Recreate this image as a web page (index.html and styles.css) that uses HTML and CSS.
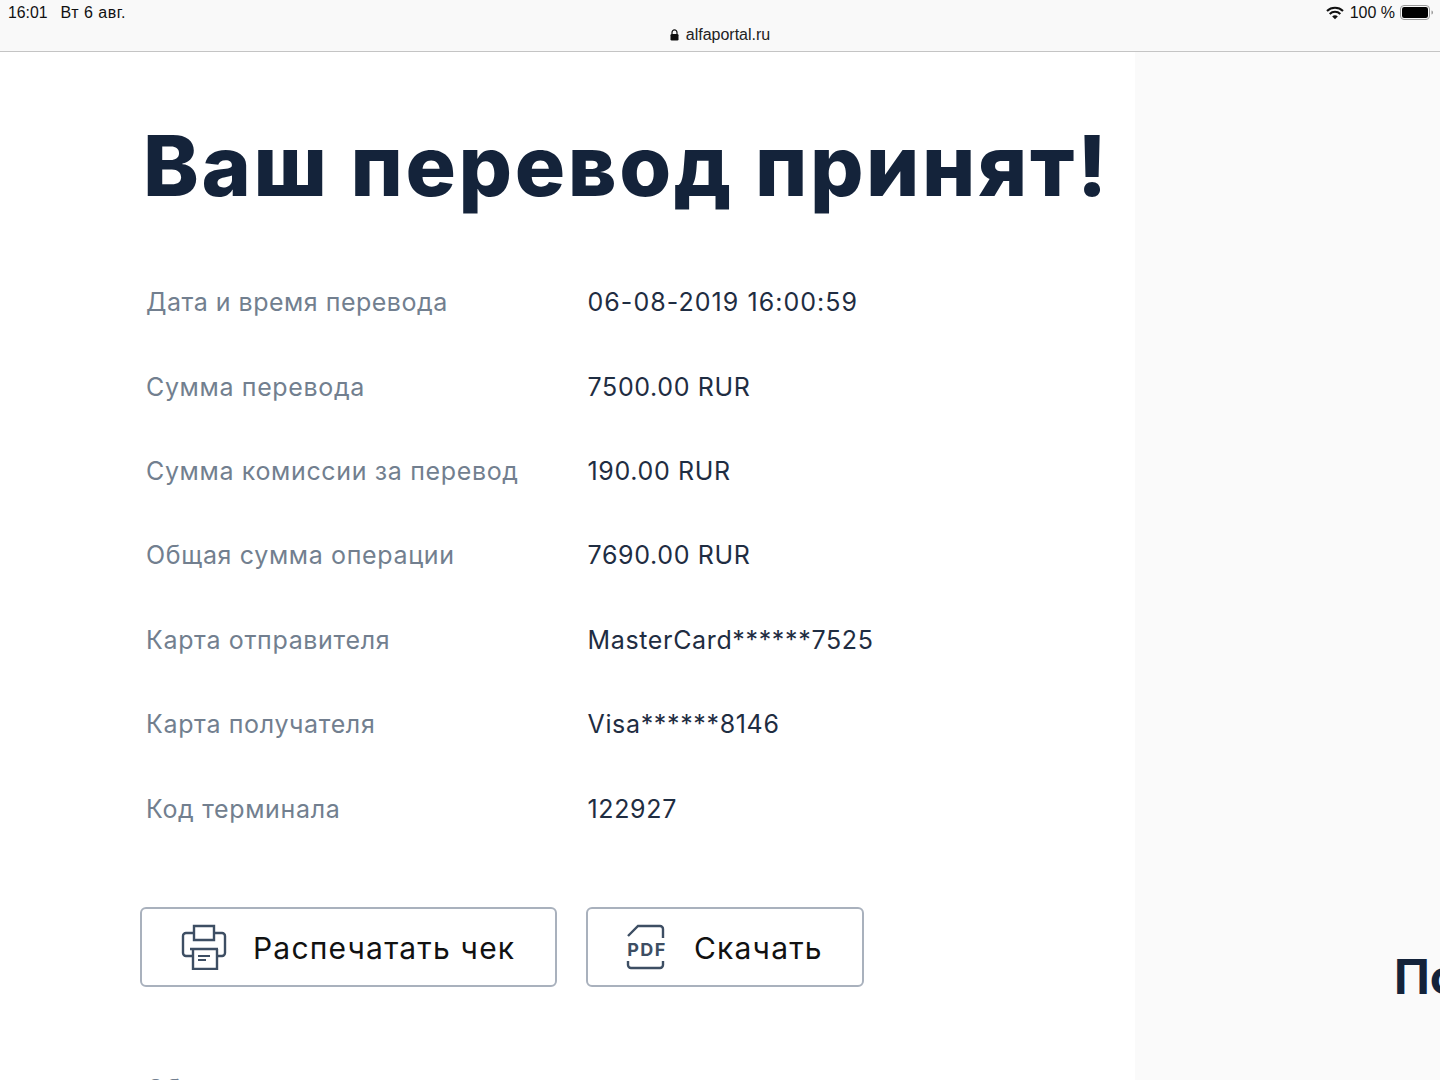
FILE: index.html
```html
<!DOCTYPE html>
<html lang="ru">
<head>
<meta charset="utf-8">
<title>Ваш перевод принят!</title>
<link rel="stylesheet" href="styles.css">
</head>
<body>
<header class="chrome">
  <div class="status">
    <div class="status-left"><span class="time">16:01</span><span class="date">Вт 6 авг.</span></div>
    <div class="status-right">
      <svg class="wifi" width="18" height="14" viewBox="0 0 18 14"><path d="M1 5a11.600 11.600 0 0 1 16 0M3.700 7.900a7.700 7.700 0 0 1 10.600 0" fill="none" stroke="#111" stroke-width="2.100"/><path d="M6.200 10.400a3.900 3.900 0 0 1 5.600 0L9 13.200z" fill="#111"/></svg>
      <span class="pct">100 %</span>
      <svg class="battery" width="34" height="15" viewBox="0 0 34 15"><rect x=".5" y=".5" width="29" height="14" rx="3.500" fill="none" stroke="#999"/><rect x="2" y="2" width="26" height="11" rx="2.200" fill="#000"/><path d="M31.500 5.500c1 .3 1.500 1 1.500 2s-.5 1.700-1.500 2z" fill="#999"/></svg>
    </div>
  </div>
  <div class="address">
    <svg class="lock" width="9" height="12" viewBox="0 0 9 12"><path d="M2 5V3.400a2.500 2.500 0 0 1 5 0V5" fill="none" stroke="#111" stroke-width="1.200"/><rect x=".5" y="5" width="8" height="6.500" rx="1.200" fill="#111"/></svg>
    <span>alfaportal.ru</span>
  </div>
</header>
<div class="layout">
  <main class="content">
    <h1 class="title">Ваш перевод принят!</h1>
    <dl class="details">
      <div class="row row-date"><dt>Дата и время перевода</dt><dd>06-08-2019 16:00:59</dd></div>
      <div class="row"><dt>Сумма перевода</dt><dd>7500.00 RUR</dd></div>
      <div class="row"><dt>Сумма комиссии за перевод</dt><dd>190.00 RUR</dd></div>
      <div class="row"><dt>Общая сумма операции</dt><dd>7690.00 RUR</dd></div>
      <div class="row"><dt>Карта отправителя</dt><dd>MasterCard******7525</dd></div>
      <div class="row"><dt>Карта получателя</dt><dd>Visa******8146</dd></div>
      <div class="row"><dt>Код терминала</dt><dd>122927</dd></div>
    </dl>
    <div class="actions">
      <button class="btn btn-print" type="button">
        <svg width="46" height="46" viewBox="0 0 46 46" fill="none" stroke="#3d4e63" stroke-width="2.400"><path d="M13 10V2h20v14H13v-6"/><path d="M13 9H5a3 3 0 0 0-3 3v17a3 3 0 0 0 3 3h7M33 9h8a3 3 0 0 1 3 3v17a3 3 0 0 1-3 3h-5"/><path d="M9 25h28M12 25v20h24V25"/><path d="M17 32h12M17 36h8" stroke-width="1.800"/></svg>
        <span>Распечатать чек</span>
      </button>
      <button class="btn btn-pdf" type="button">
        <svg width="42" height="46" viewBox="0 0 42 46" fill="none" stroke="#3d4e63" stroke-width="2.400"><path d="M2 12 12 2h22a3 3 0 0 1 3 3v9"/><path d="M2 37v4a3 3 0 0 0 3 3h29a3 3 0 0 0 3-3v-4"/><text class="pdf-label" x="21" y="32" text-anchor="middle">PDF</text></svg>
        <span>Скачать</span>
      </button>
    </div>
    <p class="clipped">Обратите внимание</p>
  </main>
  <aside class="side">
    <h2 class="side-title">По</h2>
  </aside>
</div>
</body>
</html>
```
FILE: styles.css
```css
* { box-sizing: border-box; }
html, body { margin: 0; height: 1080px; overflow: hidden; }
body { background: #fff; font-family: Inter, "Noto Sans", sans-serif; color: #14233a; display: flex; flex-direction: column; }

.chrome { height: 52px; flex: none; background: #f9f9f9; border-bottom: 1px solid #c4c4c4; font-family: "Liberation Sans", sans-serif; color: #111; }
.status { height: 25px; display: flex; justify-content: space-between; align-items: center; padding: 0 6px 0 8px; font-size: 15.800px; }
.status-left { display: flex; gap: 13px; }
.date { font-size: 16px; letter-spacing: .5px; }
.status-right { display: flex; align-items: center; gap: 6px; }
.pct { font-size: 16px; margin-right: -1px; }
.address { display: flex; justify-content: center; align-items: center; gap: 7px; font-size: 16px; height: 19px; color: #222; }

.layout { flex: 1; display: flex; min-height: 0; }
.content { width: 1135px; flex: none; padding: 67px 0 0 140px; overflow: hidden; background: #fff; }
.side { flex: 1; background: #fafafa; padding: 895px 0 0 259px; overflow: hidden; }
.side-title { margin: 0; font-size: 48px; line-height: 60px; font-weight: 700; color: #14233a; white-space: nowrap; }

.title { margin: 0 0 0 3px; font-size: 84px; line-height: 94px; font-weight: 800; color: #14233a; letter-spacing: 2.600px; white-space: nowrap; }
.details { margin: 47px 0 0 6px; }
.row { display: flex; height: 84.400px; align-items: center; font-size: 25px; letter-spacing: .65px; }
.row dt { width: 441.500px; color: #727f8f; }
.row dd { margin: 0; color: #1f2d42; }
.row-date dt { letter-spacing: .5px; }
.row-date dd { letter-spacing: 1.050px; }

.actions { display: flex; gap: 29px; margin-top: 56px; }
.btn { height: 80px; display: flex; align-items: center; background: #fff; border: 2px solid #a9b1bd; border-radius: 6px; font-family: Inter, sans-serif; font-size: 30px; letter-spacing: 1.200px; color: #111; padding: 0; }
.btn span { padding-top: 2px; }
.btn-print { width: 417px; padding-left: 39px; gap: 26px; }
.btn-pdf { width: 278px; padding-left: 38px; gap: 26px; }
.pdf-label { font-family: Inter, sans-serif; font-size: 18px; font-weight: 700; letter-spacing: 1.400px; fill: #3d4e63; stroke: none; }
.clipped { margin: 87px 0 0 6px; font-size: 25px; letter-spacing: .5px; color: #727f8f; white-space: nowrap; }
```
